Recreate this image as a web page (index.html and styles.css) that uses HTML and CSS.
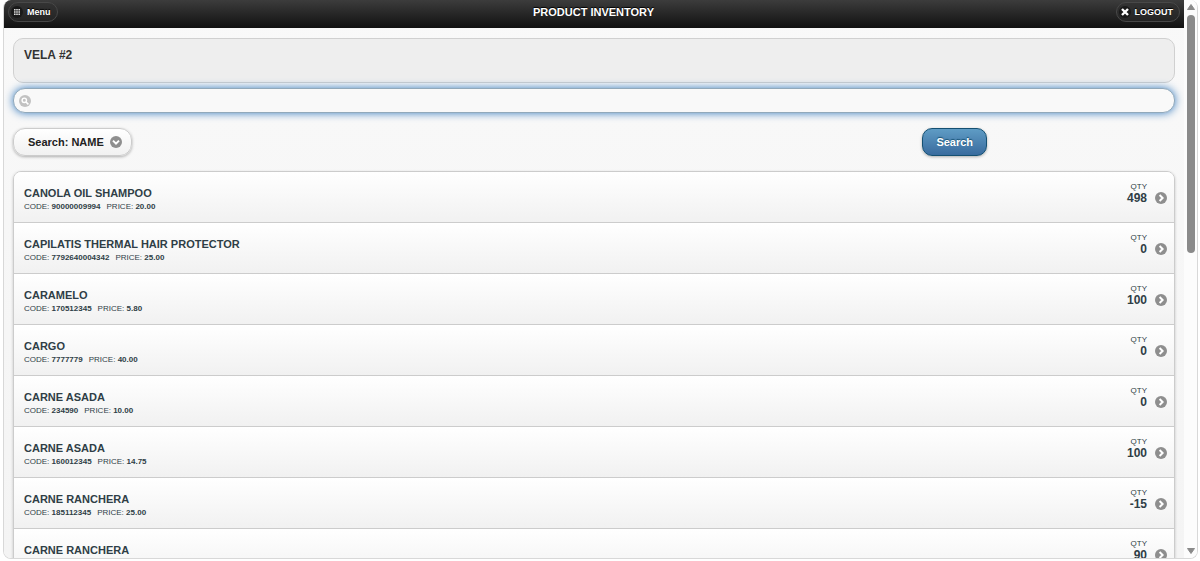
FILE: index.html
```html
<!DOCTYPE html>
<html lang="en">
<head>
    <meta charset="UTF-8">
    <meta name="viewport" content="width=device-width, initial-scale=1.0">
    <title>Product Inventory</title>
    <link rel="stylesheet" href="styles.css">
</head>
<body>
    <svg class="defs" width="0" height="0" aria-hidden="true">
        <symbol id="arrow" viewBox="0 0 12 12">
            <circle cx="6" cy="6" r="6" fill="#8e8e8e"/>
            <path d="M4.6 3 L7.6 6 L4.6 9" fill="none" stroke="#fff" stroke-width="2"/>
        </symbol>
    </svg>

    <div class="window">
        <div class="page">
            <header class="header">
                <button type="button" class="header-btn">
                    <svg class="icon" viewBox="0 0 12 12">
                        <circle cx="6" cy="6" r="6" fill="#191919"/>
                        <path d="M3 3h1.6v1.6H3zM5.2 3h1.6v1.6H5.2zM7.4 3H9v1.6H7.4zM3 5.2h1.6v1.6H3zM5.2 5.2h1.6v1.6H5.2zM7.4 5.2H9v1.6H7.4zM3 7.4h1.6V9H3zM5.2 7.4h1.6V9H5.2zM7.4 7.4H9V9H7.4z" fill="#ddd"/>
                    </svg>
                    Menu
                </button>
                <h1>PRODUCT INVENTORY</h1>
                <button type="button" class="header-btn">
                    <svg class="icon" viewBox="0 0 12 12">
                        <circle cx="6" cy="6" r="6" fill="#191919"/>
                        <path d="M3 3l6 6M9 3l-6 6" stroke="#fff" stroke-width="2.4"/>
                    </svg>
                    LOGOUT
                </button>
            </header>

            <main class="content">
                <div class="store"><h2>VELA #2</h2></div>

                <form class="search-form">
                    <div class="search-box">
                        <svg class="icon" viewBox="0 0 12 12">
                            <circle cx="6" cy="6" r="6" fill="#c2c2c2"/>
                            <circle cx="5.3" cy="5.3" r="2.2" fill="none" stroke="#fff" stroke-width="1.4"/>
                            <path d="M7 7l2.4 2.4" stroke="#fff" stroke-width="1.6"/>
                        </svg>
                        <input type="text" id="query" aria-label="Search">
                    </div>
                    <div class="controls">
                        <div class="select-wrap">
                            <select id="searchBy" aria-label="Search by">
                                <option>Search: NAME</option>
                                <option>Search: CODE</option>
                            </select>
                            <svg class="icon select-icon" viewBox="0 0 12 12">
                                <circle cx="6" cy="6" r="6" fill="#8e8e8e"/>
                                <path d="M3 4.6 L6 7.6 L9 4.6" fill="none" stroke="#fff" stroke-width="2"/>
                            </svg>
                        </div>
                        <button type="submit" class="search-btn">Search</button>
                    </div>
                </form>

                <ul class="list">
                    <li><a href="#">
                        <div class="product"><h3>CANOLA OIL SHAMPOO</h3><p><span>CODE: <b>90000009994</b></span><span>PRICE: <b>20.00</b></span></p></div>
                        <div class="qty">QTY<strong>498</strong></div><svg class="icon"><use href="#arrow"/></svg>
                    </a></li>
                    <li><a href="#">
                        <div class="product"><h3>CAPILATIS THERMAL HAIR PROTECTOR</h3><p><span>CODE: <b>7792640004342</b></span><span>PRICE: <b>25.00</b></span></p></div>
                        <div class="qty">QTY<strong>0</strong></div><svg class="icon"><use href="#arrow"/></svg>
                    </a></li>
                    <li><a href="#">
                        <div class="product"><h3>CARAMELO</h3><p><span>CODE: <b>170512345</b></span><span>PRICE: <b>5.80</b></span></p></div>
                        <div class="qty">QTY<strong>100</strong></div><svg class="icon"><use href="#arrow"/></svg>
                    </a></li>
                    <li><a href="#">
                        <div class="product"><h3>CARGO</h3><p><span>CODE: <b>7777779</b></span><span>PRICE: <b>40.00</b></span></p></div>
                        <div class="qty">QTY<strong>0</strong></div><svg class="icon"><use href="#arrow"/></svg>
                    </a></li>
                    <li><a href="#">
                        <div class="product"><h3>CARNE ASADA</h3><p><span>CODE: <b>234590</b></span><span>PRICE: <b>10.00</b></span></p></div>
                        <div class="qty">QTY<strong>0</strong></div><svg class="icon"><use href="#arrow"/></svg>
                    </a></li>
                    <li><a href="#">
                        <div class="product"><h3>CARNE ASADA</h3><p><span>CODE: <b>160012345</b></span><span>PRICE: <b>14.75</b></span></p></div>
                        <div class="qty">QTY<strong>100</strong></div><svg class="icon"><use href="#arrow"/></svg>
                    </a></li>
                    <li><a href="#">
                        <div class="product"><h3>CARNE RANCHERA</h3><p><span>CODE: <b>185112345</b></span><span>PRICE: <b>25.00</b></span></p></div>
                        <div class="qty">QTY<strong>-15</strong></div><svg class="icon"><use href="#arrow"/></svg>
                    </a></li>
                    <li><a href="#">
                        <div class="product"><h3>CARNE RANCHERA</h3></div>
                        <div class="qty">QTY<strong>90</strong></div><svg class="icon"><use href="#arrow"/></svg>
                    </a></li>
                </ul>
            </main>
        </div>

        <div class="scrollbar" aria-hidden="true">
            <svg viewBox="0 0 8 6"><path d="M4 0.5L7.5 5.5H.5z" fill="#8a8a8a" stroke="#8a8a8a" stroke-linejoin="round"/></svg>
            <div class="track"><div class="thumb"></div></div>
            <svg viewBox="0 0 8 6"><path d="M4 5.5L7.5 .5H.5z" fill="#8a8a8a" stroke="#8a8a8a" stroke-linejoin="round"/></svg>
        </div>
    </div>
</body>
</html>
```
FILE: styles.css
```css
* {
    box-sizing: border-box;
}

body {
    margin: 0;
    padding: 0 2px 2px 3px;
    height: 100vh;
    overflow: hidden;
    background-color: #fff;
    color: #333;
    font-family: "Liberation Sans", Arial, sans-serif;
}

h1, h2, h3, p, ul {
    margin: 0;
    padding: 0;
}

button, input, select {
    font-family: inherit;
    font-weight: bold;
}

.defs {
    position: absolute;
}

.icon {
    width: 12px;
    height: 12px;
    flex: none;
}

.window {
    display: flex;
    height: 100%;
    overflow: hidden;
    border: 1px solid #d8d8d8;
    border-top: none;
    border-radius: 8px;
}

.page {
    flex: 1;
    overflow: hidden;
    background: linear-gradient(#f9f9f9, #f4f4f4);
}

.header {
    display: flex;
    align-items: center;
    justify-content: space-between;
    height: 28px;
    padding: 0 4px 4px;
    background: linear-gradient(#3c3c3c, #111);
    color: #fff;
    text-shadow: 0 -1px 1px #000;
}

.header h1 {
    position: absolute;
    left: 0;
    right: 13px;
    text-align: center;
    font-size: 11px;
    line-height: 14px;
    pointer-events: none;
}

.header-btn {
    display: flex;
    align-items: center;
    gap: 4px;
    height: 20px;
    padding: 0 6px 0 2px;
    border: 1px solid #484848;
    border-radius: 10px;
    background: linear-gradient(#333, #242424);
    color: #fff;
    font-size: 9px;
    text-shadow: 0 -1px 1px #000;
    cursor: pointer;
}

.content {
    padding: 10px 9px;
}

.store {
    height: 45px;
    padding: 9px 10px;
    border: 1px solid #d0d0d0;
    border-radius: 10px;
    background-color: #eee;
}

.store h2 {
    font-size: 12px;
    line-height: 14px;
}

.search-box {
    display: flex;
    align-items: center;
    height: 25px;
    margin-top: 5px;
    padding: 0 5px;
    border: 1px solid #91a9bb;
    border-radius: 12px;
    background-color: #f9f9f9;
    box-shadow: 0 0 8px #387bbe;
}

.search-box input {
    flex: 1;
    border: none;
    outline: none;
    background: none;
    font-size: 11px;
}

.controls {
    display: grid;
    grid-template-columns: 18fr 5fr;
    justify-items: start;
    margin: 15px 0;
}

.select-wrap {
    position: relative;
}

.select-wrap select {
    appearance: none;
    height: 28px;
    padding: 0 27px 0 14px;
    border: 1px solid #ccc;
    border-radius: 12px;
    background: linear-gradient(#fff, #f1f1f1);
    box-shadow: 0 1px 3px rgba(0, 0, 0, 0.3);
    color: #222;
    font-size: 11px;
}

.select-icon {
    position: absolute;
    top: 8px;
    right: 10px;
    pointer-events: none;
}

.search-btn {
    height: 28px;
    padding: 0 13px;
    border: 1px solid #145072;
    border-radius: 10px;
    background: linear-gradient(#5f9cc5, #396b9e);
    box-shadow: 0 1px 3px rgba(0, 0, 0, 0.3);
    color: #fff;
    font-size: 11px;
    text-shadow: 0 -1px 1px #145072;
    cursor: pointer;
}

.list {
    list-style: none;
    border: 1px solid #ccc;
    border-radius: 8px;
    box-shadow: 0 1px 3px rgba(0, 0, 0, 0.2);
    overflow: hidden;
}

.list li {
    border-bottom: 1px solid #ccc;
}

.list a {
    display: flex;
    align-items: center;
    height: 50px;
    padding: 2px 7px 0 10px;
    background: linear-gradient(#fff, #f1f1f1);
    color: #2f3e46;
    text-decoration: none;
}

.product {
    flex: 1;
    align-self: flex-start;
    padding-top: 12px;
}

.product h3 {
    font-size: 11px;
    line-height: 14px;
}

.product p {
    display: flex;
    gap: 6px;
    font-size: 8px;
    line-height: 14px;
}

.qty {
    align-self: flex-start;
    margin-right: 8px;
    padding-top: 7px;
    font-size: 8px;
    line-height: 12px;
    text-align: right;
}

.qty strong {
    display: block;
    font-size: 12px;
    line-height: 10px;
}

.scrollbar {
    display: flex;
    flex-direction: column;
    align-items: center;
    gap: 5px;
    width: 13px;
    padding: 4px 0;
    background-color: #fcfcfc;
}

.scrollbar svg {
    width: 8px;
    height: 6px;
}

.track {
    flex: 1;
}

.thumb {
    width: 8px;
    height: 45%;
    border-radius: 4px;
    background-color: #8a8a8a;
}
```
